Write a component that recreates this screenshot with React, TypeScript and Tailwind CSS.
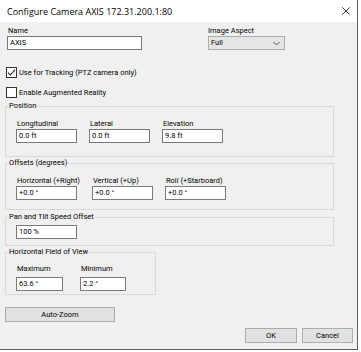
import React from "react";

const font = "font-['Roboto',_'Open_Sans',_sans-serif]";
const lbl = "text-[7.5px]";

function TextBox({ value, w }: { value: string; w: string }) {
  return (
    <div className={`${w} h-[14px] bg-white border border-[#7a7a7a] flex items-center pl-[2px] ${lbl} leading-none`}>
      {value}
    </div>
  );
}

function Field({ label, value, w }: { label: string; value: string; w: string }) {
  return (
    <div className="flex flex-col">
      <div className={`h-[10px] leading-[10px] pl-[1px] ${lbl}`}>{label}</div>
      <TextBox value={value} w={w} />
    </div>
  );
}

function Group({
  title,
  className,
  children,
}: {
  title: string;
  className: string;
  children: React.ReactNode;
}) {
  return (
    <fieldset className={`border border-[#d9d9d9] ml-[5px] ${className}`}>
      <legend className={`ml-[2px] px-[1px] h-[10px] leading-[10px] ${lbl}`}>{title}</legend>
      {children}
    </fieldset>
  );
}

function CheckBox({ checked, label }: { checked: boolean; label: string }) {
  return (
    <div className="flex items-center h-[11px] ml-[6px]">
      <div className="w-[11px] h-[11px] border border-[#333333] bg-white flex items-center justify-center">
        {checked && (
          <svg width="9" height="9" viewBox="0 0 9 9">
            <path d="M1 4.6 L3.4 7 L8 1.6" fill="none" stroke="#222" strokeWidth="1.1" />
          </svg>
        )}
      </div>
      <span className={`ml-[2px] ${lbl} leading-none`}>{label}</span>
    </div>
  );
}

function Button({ label, w }: { label: string; w: string }) {
  return (
    <div className={`${w} h-[15px] bg-[#e1e1e1] border border-[#adadad] flex items-center justify-center ${lbl} leading-none`}>
      {label}
    </div>
  );
}

export default function App() {
  return (
    <div className={`w-[361px] h-[352px] bg-white overflow-hidden text-black ${font}`}>
      <div className="w-[358px] h-[350px] border-r border-b border-[#5f5f5f] bg-[#f0f0f0] flex flex-col">
        <div className="h-[22px] bg-white flex items-center pl-[7px] pr-[7px] shrink-0">
          <span className="text-[9px] leading-none font-['Open_Sans',_sans-serif]">Configure Camera AXIS 172.31.200.1:80</span>
          <svg className="ml-auto" width="8" height="8" viewBox="0 0 8 8">
            <path d="M0.3 0.3 L7.7 7.7 M7.7 0.3 L0.3 7.7" stroke="#222" strokeWidth="0.9" />
          </svg>
        </div>
        <div className="flex flex-col flex-1">
          <div className="flex mt-[4px]">
            <div className="ml-[7px] flex flex-col">
              <div className={`h-[10px] leading-[10px] pl-[1px] ${lbl}`}>Name</div>
              <TextBox value="AXIS" w="w-[135px]" />
            </div>
            <div className="ml-[66px] flex flex-col">
              <div className={`h-[10px] leading-[10px] ${lbl}`}>Image Aspect</div>
              <div className={`w-[77px] h-[14px] bg-[#e5e5e5] border border-[#acacac] flex items-center pl-[2px] pr-[4px] ${lbl} leading-none`}>
                <span>Full</span>
                <svg className="ml-auto" width="7" height="5" viewBox="0 0 7 5">
                  <path d="M0.5 1 L3.5 4 L6.5 1" fill="none" stroke="#444" strokeWidth="0.9" />
                </svg>
              </div>
            </div>
          </div>
          <div className="mt-[17px]">
            <CheckBox checked label="Use for Tracking (PTZ camera only)" />
          </div>
          <div className="mt-[9px]">
            <CheckBox checked={false} label="Enable Augmented Reality" />
          </div>
          <Group title="Position" className="mt-[3px] w-[329px] h-[56px]">
            <div className="flex gap-[12px] pl-[10px] mt-[8px]">
              <Field label="Longitudinal" value="0.0 ft" w="w-[61px]" />
              <Field label="Lateral" value="0.0 ft" w="w-[61px]" />
              <Field label="Elevation" value="9.8 ft" w="w-[61px]" />
            </div>
          </Group>
          <Group title="Offsets (degrees)" className="mt-[1px] w-[329px] h-[52px]">
            <div className="flex gap-[12px] pl-[10px] mt-[8px]">
              <Field label="Horizontal (+Right)" value="+0.0 °" w="w-[61px]" />
              <Field label="Vertical (+Up)" value="+0.0 °" w="w-[61px]" />
              <Field label="Roll (+Starboard)" value="+0.0 °" w="w-[61px]" />
            </div>
          </Group>
          <Group title="Pan and Tilt Speed Offset" className="mt-[2px] w-[329px] h-[34px]">
            <div className="pl-[10px] mt-[3px]">
              <TextBox value="100 %" w="w-[61px]" />
            </div>
          </Group>
          <Group title="Horizontal Field of View" className="mt-[1px] w-[151px] h-[48px]">
            <div className="flex gap-[17px] pl-[10px] mt-[7px]">
              <div className="flex flex-col">
                <div className={`h-[10px] leading-[10px] pl-[1px] ${lbl}`}>Maximum</div>
                <div className="mt-[3px]">
                  <TextBox value="63.6 °" w="w-[47px]" />
                </div>
              </div>
              <div className="flex flex-col">
                <div className={`h-[10px] leading-[10px] pl-[1px] ${lbl}`}>Minimum</div>
                <div className="mt-[3px]">
                  <TextBox value="2.2 °" w="w-[46px]" />
                </div>
              </div>
            </div>
          </Group>
          <div className="ml-[5px] mt-[12px]">
            <Button label="Auto-Zoom" w="w-[110px]" />
          </div>
          <div className="flex justify-end gap-[5px] pr-[4px] mt-[6px]">
            <Button label="OK" w="w-[52px]" />
            <Button label="Cancel" w="w-[51px]" />
          </div>
        </div>
      </div>
    </div>
  );
}
